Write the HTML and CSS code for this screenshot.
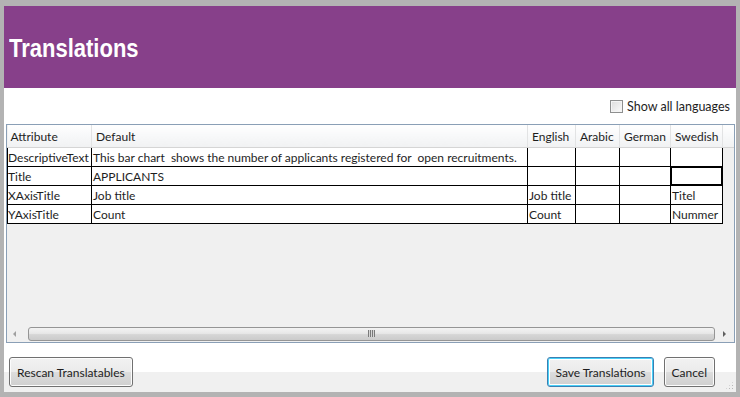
FILE: index.html
```html
<!DOCTYPE html>
<html lang="en">
<head>
    <meta charset="UTF-8">
    <title>Translations</title>
    <link rel="stylesheet" href="styles.css">
</head>
<body class="body">

<div class="window">
    <div class="header">
        <h1 class="title">Translations</h1>
    </div>

    <div class="content">
        <div class="options">
            <label class="check">
                <span class="check-box"></span>
                <span>Show all languages</span>
            </label>
        </div>

        <!-- Translation grid -->
        <div class="grid">
            <table class="grid-table">
                <colgroup>
                    <col style="width: 84px">
                    <col style="width: 436px">
                    <col style="width: 48px">
                    <col style="width: 44px">
                    <col style="width: 51px">
                    <col style="width: 52px">
                    <col>
                </colgroup>
                <thead>
                    <tr>
                        <th>Attribute</th>
                        <th>Default</th>
                        <th>English</th>
                        <th>Arabic</th>
                        <th>German</th>
                        <th>Swedish</th>
                        <th class="filler"></th>
                    </tr>
                </thead>
                <tbody>
                    <tr>
                        <td>DescriptiveText</td>
                        <td>This bar chart&nbsp; shows the number of applicants registered for&nbsp; open recruitments.</td>
                        <td></td>
                        <td></td>
                        <td></td>
                        <td></td>
                        <td class="filler"></td>
                    </tr>
                    <tr>
                        <td>Title</td>
                        <td>APPLICANTS</td>
                        <td></td>
                        <td></td>
                        <td></td>
                        <td class="selected"></td>
                        <td class="filler"></td>
                    </tr>
                    <tr>
                        <td>XAxisTitle</td>
                        <td>Job title</td>
                        <td>Job title</td>
                        <td></td>
                        <td></td>
                        <td>Titel</td>
                        <td class="filler"></td>
                    </tr>
                    <tr>
                        <td>YAxisTitle</td>
                        <td>Count</td>
                        <td>Count</td>
                        <td></td>
                        <td></td>
                        <td>Nummer</td>
                        <td class="filler"></td>
                    </tr>
                </tbody>
            </table>
            <div class="grid-empty"></div>
            <div class="hscroll">
                <span class="arrow arrow-left"></span>
                <div class="thumb"><span class="grip"></span></div>
                <span class="arrow arrow-right"></span>
            </div>
        </div>

        <div class="footer">
            <button class="btn">Rescan Translatables</button>
            <div class="footer-right">
                <button class="btn btn-focus">Save Translations</button>
                <button class="btn">Cancel</button>
            </div>
            <span class="grip-corner"></span>
        </div>
    </div>
</div>

</body>
</html>
```

FILE: styles.css
```css
/* CSS */
.body {
    margin: 0;
    background: #b3b3b3;
    font-family: "Lato", "Open Sans", sans-serif;
    font-size: 12px;
    color: #1e1e1e;
}

.window {
    margin: 6px 4px 5px 4px;
    height: 386px;
    display: flex;
    flex-direction: column;
    background: #fff;
}

.header {
    height: 82px;
    background: #87408a;
    display: flex;
    align-items: center;
    padding-left: 5px;
}

.title {
    margin: 2px 0 0 0;
    color: #fff;
    font-family: "Liberation Sans", "Arial", sans-serif;
    font-weight: bold;
    font-size: 25px;
    transform: scaleX(0.88);
    transform-origin: left center;
}

.content {
    flex: 1;
    display: flex;
    flex-direction: column;
}

.options {
    display: flex;
    justify-content: flex-end;
    padding: 10px 6px 0 0;
    height: 26px;
    box-sizing: border-box;
}

.check {
    display: flex;
    align-items: center;
    gap: 4px;
    font-size: 12.5px;
}

.check-box {
    width: 11px;
    height: 11px;
    border: 1px solid #8e8f8f;
    background: linear-gradient(135deg, #dcdcdc, #fbfbfb);
    box-shadow: inset 0 0 0 1px #f4f4f4;
}

.grid {
    margin: 10px 1px 0 2px;
    height: 219px;
    box-sizing: border-box;
    border: 1px solid #8a9fb6;
    background: #f0f0f0;
    display: flex;
    flex-direction: column;
}

.grid-table {
    table-layout: fixed;
    width: 100%;
    border-collapse: collapse;
}

.grid-table th {
    height: 22px;
    padding: 0 0 0 4px;
    text-align: left;
    font-weight: normal;
    background: linear-gradient(#ffffff, #f7f8f9 50%, #f1f2f3);
    border-right: 1px solid #e2e3e4;
    border-bottom: 1px solid #d5d5d5;
    white-space: nowrap;
    overflow: hidden;
}

.grid-table th:first-child {
    padding-left: 3px;
}

.grid-table th.filler {
    border-right: none;
}

.grid-table td {
    height: 18px;
    padding: 0 0 0 1px;
    border: 1px solid #000;
    background: #fff;
    white-space: nowrap;
    overflow: hidden;
}

.grid-table td:first-child {
    padding-left: 0;
}

.grid-table td.filler {
    border: none;
    border-left: 1px solid #000;
    background: #f0f0f0;
}

.grid-table td.selected {
    box-shadow: inset 0 0 0 1px #000;
}

.grid-empty {
    flex: 1;
}

.hscroll {
    height: 17px;
    display: flex;
    align-items: center;
    background: #f0f0f0;
}

.arrow {
    width: 0;
    height: 0;
    border: 3px solid transparent;
}

.arrow-left {
    margin: 0 8px 0 6px;
    border-right-color: #a0a0a0;
    border-left: none;
}

.arrow-right {
    margin: 0 8px 0 8px;
    border-left-color: #606060;
    border-right: none;
}

.thumb {
    flex: 1;
    height: 14px;
    margin-left: 4px;
    box-sizing: border-box;
    border: 1px solid #959595;
    border-radius: 3px;
    background: linear-gradient(#f3f3f3, #e8e8e8 45%, #d6d6d6 55%, #cbcbcb);
    display: flex;
    align-items: center;
    justify-content: center;
}

.grip {
    width: 7px;
    height: 7px;
    background: repeating-linear-gradient(90deg, #7a7a7a 0 1px, #d6d6d6 1px 2px);
}

.footer {
    flex: 1;
    position: relative;
    display: flex;
    align-items: flex-start;
    justify-content: space-between;
    padding: 14px 21px 0 5px;
    background: linear-gradient(#fff 0 29px, #f0f0f0 29px);
}

.footer-right {
    display: flex;
    gap: 10px;
}

.btn {
    height: 30px;
    padding: 0 7px;
    font-family: "Lato", "Open Sans", sans-serif;
    font-size: 12px;
    color: #1e1e1e;
    border: 1px solid #707070;
    border-radius: 3px;
    background: linear-gradient(#f2f2f2, #ebebeb 50%, #dddddd 50%, #cfcfcf);
    box-shadow: inset 0 0 0 1px #fcfcfc;
}

.btn-focus {
    border-color: #3c7fb1;
    box-shadow: inset 0 0 0 1px #48d0f8, inset 0 0 0 2px #fff;
}

.grip-corner {
    position: absolute;
    right: 2px;
    bottom: 2px;
    width: 9px;
    height: 9px;
    background: radial-gradient(circle, #b8b8b8 0.8px, transparent 1px) 0 0 / 3px 3px;
    clip-path: polygon(100% 0, 100% 100%, 0 100%);
}
```
